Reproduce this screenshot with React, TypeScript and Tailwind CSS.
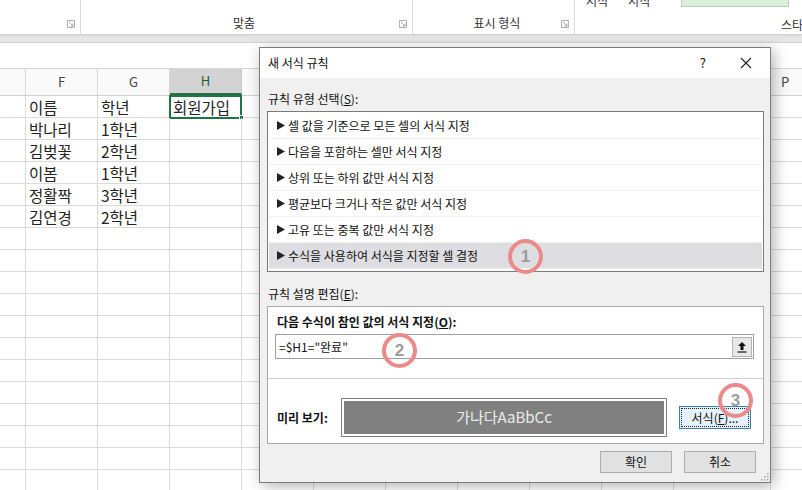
import React from 'react'

const KR = "font-['Noto_Sans_CJK_KR','Noto_Sans',sans-serif]"

const colW = [26, 72, 72, 72, 72, 72, 72, 72, 72, 72, 97, 80]
const heads = ['', 'F', 'G', 'H', 'I', 'J', 'K', 'L', 'M', 'N', 'O', 'P']
const data: string[][] = [
  ['', '이름', '학년', '회원가입'],
  ['', '박나리', '1학년'],
  ['', '김벚꽃', '2학년'],
  ['', '이봄', '1학년'],
  ['', '정활짝', '3학년'],
  ['', '김연경', '2학년'],
]

const rules = [
  '셀 값을 기준으로 모든 셀의 서식 지정',
  '다음을 포함하는 셀만 서식 지정',
  '상위 또는 하위 값만 서식 지정',
  '평균보다 크거나 작은 값만 서식 지정',
  '고유 또는 중복 값만 서식 지정',
  '수식을 사용하여 서식을 지정할 셀 결정',
]

function Launcher() {
  return (
    <svg width="8" height="8" viewBox="0 0 8 8" className="text-[#9a9a9a]">
      <path d="M0.5 0.5h7v7h-7z" fill="none" stroke="currentColor" strokeWidth="0.8" />
      <path d="M2 2l4 4M6 3.5V6H3.5" fill="none" stroke="currentColor" strokeWidth="0.8" />
    </svg>
  )
}

function Ribbon() {
  return (
    <div className={`flex h-[34px] bg-white text-[12px] text-[#333] shadow-[0_1px_2px_rgba(0,0,0,0.12)] relative z-10 ${KR}`}>
      <div className="w-[81px] border-r border-[#dcdcdc] flex items-end justify-end pr-[5px] pb-[6px]">
        <Launcher />
      </div>
      <div className="w-[332px] border-r border-[#dcdcdc] flex items-end pb-[2px]">
        <div className="flex-1 text-center pl-[8px] leading-[18px]">맞춤</div>
        <div className="pr-[5px] pb-[4px]"><Launcher /></div>
      </div>
      <div className="w-[162px] border-r border-[#dcdcdc] flex items-end pb-[2px]">
        <div className="flex-1 text-center pl-[20px] leading-[18px]">표시 형식</div>
        <div className="pr-[5px] pb-[4px]"><Launcher /></div>
      </div>
      <div className="flex-1 flex flex-col overflow-hidden">
        <div className="flex h-[16px] items-start">
          <div className="flex gap-[20px] pl-[11px] -mt-[8px] leading-[18px]">
            <span>서식</span>
            <span>서식</span>
          </div>
          <div className="ml-[31px] w-[108px] h-[7px] border border-t-0 border-[#c8c8c8] bg-[#d9f0d9]" />
        </div>
        <div className="pl-[206px] whitespace-nowrap leading-[18px]">스타일</div>
      </div>
    </div>
  )
}

function Sheet() {
  return (
    <div className={`${KR}`}>
      <div className="h-[9px] bg-[#e6e6e6] border-b border-[#d2d2d2]" />
      <div className="h-[26px] bg-white border-b border-[#d6d6d6]" />
      <div className="flex h-[27px] bg-[#fafafa] border-b border-[#d0d0d0] text-[13px] text-[#444]">
        {heads.map((h, i) =>
          h === 'H' ? (
            <div key={i} style={{ width: colW[i] }} className="shrink-0 bg-[#d3d3d3] border-r border-[#c8c8c8] border-b-2 border-b-[#217346] text-[#1e5e38] flex items-center justify-center">
              {h}
            </div>
          ) : (
            <div key={i} style={{ width: colW[i] }} className={`shrink-0 border-r border-[#d6d6d6] flex items-center ${h === 'P' ? 'pl-[10px]' : 'justify-center'}`}>
              {h}
            </div>
          )
        )}
      </div>
      {Array.from({ length: 18 }).map((_, r) => (
        <div key={r} className="flex h-[22px] border-b border-[#dadada] text-[15.5px] text-[#222]">
          {colW.map((w, c) => {
            const t = data[r]?.[c] ?? ''
            return (
              <div key={c} style={{ width: w }} className="shrink-0 border-r border-[#dadada] relative flex items-center pl-[3px] pt-[2px] leading-none whitespace-nowrap">
                {t}
                {r === 0 && c === 3 && (
                  <>
                    <div className="absolute -left-[1px] -top-[1px] w-[73px] h-[24px] border-2 border-[#217346]" />
                    <div className="absolute -right-[3px] -bottom-[3px] w-[5px] h-[5px] bg-[#217346] border border-white" />
                  </>
                )}
              </div>
            )
          })}
        </div>
      ))}
    </div>
  )
}

function Circle({ n, pos }: { n: string; pos: string }) {
  return (
    <div className={`absolute ${pos} w-[35px] h-[35px] rounded-full border-[4px] border-[#ec8a8a] flex items-center justify-center font-['Liberation_Sans',sans-serif] font-bold text-[17px] text-[#9c9c9c]`}>
      {n}
    </div>
  )
}

function Dialog() {
  return (
    <div className={`absolute left-[259px] top-[47px] w-[512px] h-[436px] border border-[#7c7c7c] bg-[#f0f0f0] shadow-[3px_3px_14px_rgba(0,0,0,0.3)] flex flex-col text-[12px] text-[#111] ${KR}`}>
      <div className="h-[30px] bg-white flex items-center pl-[8px] shrink-0">
        <span className="flex-1">새 서식 규칙</span>
        <span className="mr-[34px] text-[13px]">?</span>
        <svg width="12" height="12" viewBox="0 0 12 12" className="mr-[18px]">
          <path d="M1 1l10 10M11 1L1 11" stroke="#222" strokeWidth="1.1" />
        </svg>
      </div>
      <div className="flex flex-col px-[7px] flex-1 relative">
        <div className="mt-[13px] leading-[16px] pl-[1px]">
          규칙 유형 선택(<span className="underline">S</span>):
        </div>
        <div className="mt-[4px] h-[161px] border border-[#7a7a7a] bg-white p-[1px] mr-[-1px]">
          {rules.map((t, i) => (
            <div key={i} className={`h-[26px] flex items-center pl-[8px] gap-[3px] border-b border-[#f0f0f0] ${i === 5 ? 'bg-[#dddde2]' : ''}`}>
              <svg width="8" height="9" viewBox="0 0 8 9"><path d="M0 0l8 4.5L0 9z" fill="#222" /></svg>
              <span>{t}</span>
            </div>
          ))}
        </div>
        <div className="mt-[14px] leading-[16px] pl-[1px]">
          규칙 설명 편집(<span className="underline">E</span>):
        </div>
        <div className="mt-[4px] h-[138px] border border-[#a8a8a8] bg-white flex flex-col mr-[-1px]">
          <div className="mt-[7px] pl-[9px] font-bold leading-[16px]">
            다음 수식이 참인 값의 서식 지정(<span className="underline">O</span>):
          </div>
          <div className="mt-[4px] ml-[7px] w-[479px] h-[25px] border border-[#a0a0a0] flex items-center pl-[3px]">
            <span className="flex-1">=$H1="완료"</span>
            <div className="w-[20px] h-[20px] mr-[1px] bg-[#e8e8e8] border border-[#b4b4b4] flex items-center justify-center">
              <svg width="10" height="12" viewBox="0 0 10 12">
                <path d="M5 1L1 5h2.5v4h3V5H9z" fill="#111" />
                <path d="M0.5 11h9" stroke="#111" strokeWidth="1.2" />
              </svg>
            </div>
          </div>
          <div className="mt-[19px] h-px bg-[#cfcfcf]" />
          <div className="mt-[19px] h-[39px] flex items-center pl-[9px]">
            <span className="w-[64px] font-bold">미리 보기:</span>
            <div className="w-[326px] h-[39px] border border-[#808080] bg-white p-[2px]">
              <div className="w-full h-full bg-[#808080] flex items-center justify-center text-[15px] text-[#ececec]">가나다AaBbCc</div>
            </div>
            <div className="ml-[12px] w-[72px] h-[23px] border border-[#3c7fb1] bg-[#e5f1fb] p-[1px]">
              <div className="w-full h-full border border-dotted border-[#222] flex items-center justify-center">
                서식(<span className="underline">F</span>)...
              </div>
            </div>
          </div>
        </div>
        <div className="mt-[7px] flex justify-end gap-[12px] mr-[7px]">
          <div className="w-[72px] h-[22px] border border-[#adadad] bg-[#e1e1e1] flex items-center justify-center">확인</div>
          <div className="w-[72px] h-[22px] border border-[#adadad] bg-[#e1e1e1] flex items-center justify-center">취소</div>
        </div>
        <svg width="8" height="8" viewBox="0 0 8 8" className="absolute right-[1px] bottom-[1px]">
          <g fill="#a8a8a8">
            <rect x="6" y="0" width="1.5" height="1.5" />
            <rect x="3" y="3" width="1.5" height="1.5" />
            <rect x="6" y="3" width="1.5" height="1.5" />
            <rect x="0" y="6" width="1.5" height="1.5" />
            <rect x="3" y="6" width="1.5" height="1.5" />
            <rect x="6" y="6" width="1.5" height="1.5" />
          </g>
        </svg>
      </div>
    </div>
  )
}

export default function App() {
  return (
    <div className="relative w-[802px] h-[490px] overflow-hidden bg-white">
      <Ribbon />
      <Sheet />
      <Dialog />
      <Circle n="1" pos="left-[508px] top-[239px]" />
      <Circle n="2" pos="left-[382px] top-[333px]" />
      <Circle n="3" pos="left-[718px] top-[383px]" />
    </div>
  )
}
